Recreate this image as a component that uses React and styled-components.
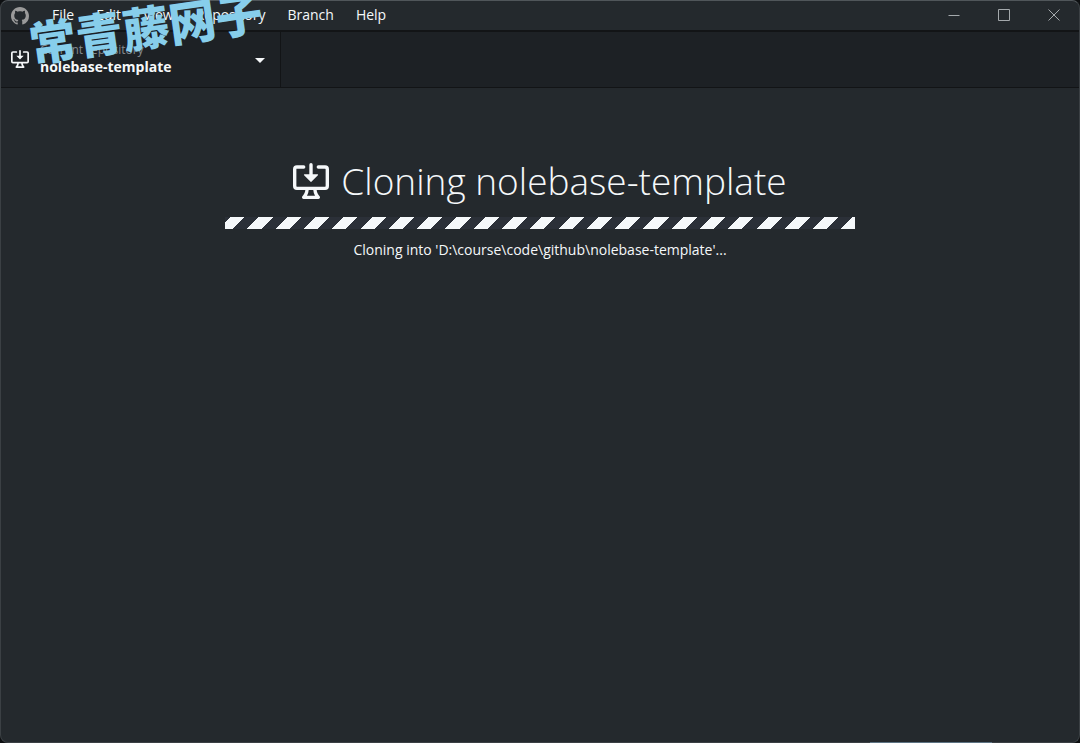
import React from 'react';
import styled, { createGlobalStyle } from 'styled-components';

const GlobalStyle = createGlobalStyle`
* {
  box-sizing: border-box;
}
html, body, #root {
  height: 100%;
}
body {
  margin: 0;
  background: #0d0f11;
  overflow: hidden;
  font-family: "Open Sans", "Noto Sans", sans-serif;
  font-size: 14px;
}
button {
  margin: 0;
  border: 0;
  background: none;
  color: inherit;
  font: inherit;
}
`;

const Window = styled.div`
position: relative;
display: flex;
flex-direction: column;
min-height: 100%;
border: 1px solid #3b4044;
border-top-color: #50565a;
border-radius: 8px;
background: #24292d;
color: #f5f8fa;
`;

// light strip of the window behind, seen along the bottom border
const EdgeStrip = styled.div`
position: absolute;
right: 87px;
bottom: -1px;
width: 122px;
height: 1px;
background: #5d7383;
`;

const TitleBar = styled.header`
display: flex;
align-items: center;
height: 31px;
padding-left: 10px;
border-bottom: 2px solid #121416;
`;

const Logo = styled.svg`
display: block;
width: 18px;
height: 18px;
margin-right: 12px;
fill: #9a9a9a;
`;

const Menu = styled.nav`
display: flex;
flex: 1;
`;

const MenuButton = styled.button`
height: 29px;
padding: 0 11px 2px;
font-size: 14px;
line-height: 27px;
`;

const WindowButton = styled.button`
display: flex;
align-items: center;
justify-content: center;
width: 50px;
height: 29px;
padding: 0 0 2px;
`;

const ControlIcon = styled.svg`
display: block;
width: 12px;
height: 12px;
fill: none;
stroke: #a4a9ac;
`;

const Toolbar = styled.div`
display: flex;
height: 56px;
background: #1d2125;
border-bottom: 1px solid #121416;
`;

const RepositoryButton = styled.button`
display: flex;
align-items: center;
width: 280px;
padding: 0 15px 2px 10px;
border-right: 1px solid #121416;
text-align: left;
`;

const RepositoryText = styled.span`
flex: 1;
padding-left: 11px;
`;

const Label = styled.span`
display: block;
color: #858b90;
font-size: 12px;
line-height: 16px;
`;

const RepositoryName = styled.span`
display: block;
font-size: 14px;
font-weight: 700;
line-height: 17px;
`;

const Caret = styled.span`
margin-top: 4px;
border: 5px solid transparent;
border-top-color: #f5f8fa;
border-bottom: 0;
`;

const DownloadIcon = styled.svg`
display: block;
flex: none;
width: ${props => props.$size}px;
height: ${props => props.$size}px;
fill: currentColor;
`;

const Content = styled.main`
display: flex;
flex: 1;
flex-direction: column;
align-items: center;
padding: 68px 24px 24px;
`;

const Title = styled.h1`
display: flex;
align-items: center;
gap: 12px;
margin: 0 0 11px;
font-size: 37px;
font-weight: 300;
line-height: 50px;
white-space: nowrap;
`;

const Progress = styled.div`
width: 100%;
max-width: 630px;
height: 12px;
background: repeating-linear-gradient(
  -45deg,
  #f5f8fa 0 1px,
  #f5f8fa 1px 10px,
  #2b3038 10px 20px
);
`;

const Status = styled.p`
margin: 10px 0 0;
font-size: 14px;
line-height: 22px;
`;

// sits across the menu and the repository button
const Watermark = styled.div`
position: absolute;
top: 0;
left: 28px;
color: #87ceeb;
font-family: "Noto Sans CJK SC", sans-serif;
font-size: 47px;
font-weight: 900;
line-height: 52px;
white-space: nowrap;
transform: rotate(-8deg);
pointer-events: none;
`;

const Download = ({ size }) => (
  <DownloadIcon $size={size} viewBox="0 0 16 16" aria-hidden="true">
    <path d="M4.927 5.427l2.896 2.896a.25.25 0 00.354 0l2.896-2.896A.25.25 0 0010.896 5H8.75V.75a.75.75 0 10-1.5 0V5H5.104a.25.25 0 00-.177.427z" />
    <path d="M1.573 2.573a.25.25 0 00-.073.177v7.5a.25.25 0 00.25.25h12.5a.25.25 0 00.25-.25v-7.5a.25.25 0 00-.25-.25h-3a.75.75 0 110-1.5h3A1.75 1.75 0 0116 2.75v7.5A1.75 1.75 0 0114.25 12h-3.727c.099 1.041.52 1.872 1.292 2.757A.75.75 0 0111.25 16h-6.5a.75.75 0 01-.565-1.243c.772-.885 1.192-1.716 1.292-2.757H1.75A1.75 1.75 0 010 10.25v-7.5A1.75 1.75 0 011.75 1h3a.75.75 0 010 1.5h-3a.25.25 0 00-.177.073zM6.982 12a5.72 5.72 0 01-.765 2.5h3.566a5.72 5.72 0 01-.765-2.5H6.982z" />
  </DownloadIcon>
);

const menus = ['File', 'Edit', 'View', 'Repository', 'Branch', 'Help'];

const controls = [
  { name: 'Minimize', path: 'M0.5 6.5h11' },
  { name: 'Maximize', path: 'M0.5 0.5h11v11h-11z' },
  { name: 'Close', path: 'M0.5 0.5l11 11M11.5 0.5l-11 11' },
];

const App = () => (
  <>
    <GlobalStyle />
    <Window>
      <TitleBar>
        <Logo viewBox="0 0 16 16" aria-hidden="true">
          <path d="M8 0C3.58 0 0 3.58 0 8c0 3.54 2.29 6.53 5.47 7.59.4.07.55-.17.55-.38 0-.19-.01-.82-.01-1.49-2.01.37-2.53-.49-2.69-.94-.09-.23-.48-.94-.82-1.13-.28-.15-.68-.52-.01-.53.63-.01 1.08.58 1.23.82.72 1.21 1.87.87 2.33.66.07-.52.28-.87.51-1.07-1.78-.2-3.64-.89-3.64-3.95 0-.87.31-1.59.82-2.15-.08-.2-.36-1.02.08-2.12 0 0 .67-.21 2.2.82.64-.18 1.32-.27 2-.27s1.36.09 2 .27c1.53-1.04 2.2-.82 2.2-.82.44 1.1.16 1.92.08 2.12.51.56.82 1.27.82 2.15 0 3.07-1.87 3.75-3.65 3.95.29.25.54.73.54 1.48 0 1.07-.01 1.93-.01 2.2 0 .21.15.46.55.38A8.01 8.01 0 0016 8c0-4.42-3.58-8-8-8z" />
        </Logo>
        <Menu>
          {menus.map((name) => (
            <MenuButton key={name} type="button">{name}</MenuButton>
          ))}
        </Menu>
        {controls.map((control) => (
          <WindowButton key={control.name} type="button" aria-label={control.name}>
            <ControlIcon viewBox="0 0 12 12">
              <path d={control.path} />
            </ControlIcon>
          </WindowButton>
        ))}
      </TitleBar>
      <Toolbar>
        <RepositoryButton type="button">
          <Download size={18} />
          <RepositoryText>
            <Label>Current repository</Label>
            <RepositoryName>nolebase-template</RepositoryName>
          </RepositoryText>
          <Caret />
        </RepositoryButton>
      </Toolbar>
      <Content>
        <Title>
          <Download size={36} />
          Cloning nolebase-template
        </Title>
        <Progress role="progressbar" aria-label="Cloning nolebase-template" />
        <Status>Cloning into 'D:\course\code\github\nolebase-template'...</Status>
      </Content>
      <EdgeStrip />
    </Window>
    <Watermark>常青藤网子</Watermark>
  </>
);

export default App;
